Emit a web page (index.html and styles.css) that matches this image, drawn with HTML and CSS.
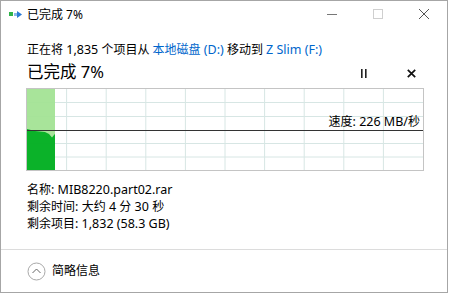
FILE: index.html
```html
<!DOCTYPE html>
<html lang="zh-CN">
<head>
<meta charset="utf-8">
<title>已完成 7%</title>
<link rel="stylesheet" href="styles.css">
</head>
<body>
<div class="window">
  <div class="titlebar">
    <svg class="app-icon" width="16" height="16" viewBox="0 0 16 16">
      <rect x="1" y="5" width="4" height="4" fill="#2fb34a"/>
      <rect x="6" y="6" width="4" height="3" fill="#8ab8e8"/>
      <path d="M9 4 L14 7.5 L9 11 Z" fill="#2a7ad6"/>
      <rect x="9" y="6" width="2" height="3" fill="#2a7ad6"/>
    </svg>
    <div class="title">已完成 7%</div>
    <div class="controls">
      <div class="ctl"><svg width="10" height="10" viewBox="0 0 10 10"><path d="M0 5.5 H10" stroke="#777" stroke-width="1"/></svg></div>
      <div class="ctl"><svg width="10" height="10" viewBox="0 0 10 10"><rect x="0.5" y="0.5" width="9" height="9" fill="none" stroke="#cfcfcf"/></svg></div>
      <div class="ctl"><svg width="10" height="10" viewBox="0 0 10 10"><path d="M0 0 L10 10 M10 0 L0 10" stroke="#555" stroke-width="1"/></svg></div>
    </div>
  </div>
  <div class="content">
    <div class="line1">正在将<span class="en"> 1,835 </span>个项目从 <span class="link">本地磁盘<span class="en"> (D:)</span></span> 移动到 <span class="link en">Z Slim (F:)</span></div>
    <div class="headrow">
      <div class="big">已完成 7%</div>
      <div class="actions">
        <svg class="pause" width="8" height="9" viewBox="0 0 8 9"><rect x="1" y="0" width="1.6" height="9" fill="#222"/><rect x="5" y="0" width="1.6" height="9" fill="#222"/></svg>
        <svg class="stop" width="9" height="9" viewBox="0 0 9 9"><path d="M0.8 0.8 L8.2 8.2 M8.2 0.8 L0.8 8.2" stroke="#111" stroke-width="1.7"/></svg>
      </div>
    </div>
    <div class="graph">
      <svg class="chart" width="396" height="81" viewBox="0 0 396 81">
        <g stroke="#d7e6e4" stroke-width="1">
          <path d="M39.6 0 V81 M79.2 0 V81 M118.8 0 V81 M158.4 0 V81 M198 0 V81 M237.6 0 V81 M277.2 0 V81 M316.8 0 V81 M356.4 0 V81"/>
          <path d="M0 13.5 H396 M0 27.5 H396 M0 54.5 H396 M0 68 H396"/>
        </g>
        <rect x="0" y="0" width="28" height="81" fill="#a3e294" fill-opacity="0.94"/>
        <path d="M0 40 L2 40.5 L8 42 L18 43 L22 45 L25 48.5 L27 46 L28 45 L28 81 L0 81 Z" fill="#06b025" fill-opacity="0.97"/>
        <path d="M0 41.5 H396" stroke="#333" stroke-width="1.2"/>
      </svg>
      <div class="speed">速度<span class="en">: 226 MB/</span>秒</div>
    </div>
    <div class="details">
      <div>名称<span class="en">: MIB8220.part02.rar</span></div>
      <div>剩余时间<span class="en">: </span>大约<span class="en"> 4 </span>分<span class="en"> 30 </span>秒</div>
      <div>剩余项目<span class="en">: 1,832 (58.3 GB)</span></div>
    </div>
  </div>
  <div class="footer">
    <svg class="toggle" width="19" height="19" viewBox="0 0 19 19">
      <circle cx="9.5" cy="9.5" r="8.5" fill="none" stroke="#a8a8a8" stroke-width="1"/>
      <path d="M5.5 11 L9.5 7 L13.5 11" fill="none" stroke="#666" stroke-width="1"/>
    </svg>
    <span class="footer-text">简略信息</span>
  </div>
</div>
</body>
</html>
```
FILE: styles.css
```css
html, body {
  margin: 0;
  padding: 0;
  background: #ffffff;
}
body {
  font-family: "Noto Sans", "Noto Sans CJK SC", sans-serif;
  font-size: 12px;
  color: #000;
}
.en {
  font-size: 12.5px;
}
.window {
  width: 446px;
  height: 291px;
  border: 1px solid #a6a6a6;
  display: flex;
  flex-direction: column;
  background: #fff;
  overflow: hidden;
}
.titlebar {
  height: 30px;
  display: flex;
  align-items: center;
  flex: none;
}
.app-icon {
  margin-left: 7px;
  margin-right: 3px;
  margin-top: -2px;
}
.title {
  flex: 1;
  line-height: 17px;
  margin-top: -3px;
}
.controls {
  display: flex;
  height: 30px;
}
.ctl {
  width: 46px;
  height: 30px;
  display: flex;
  align-items: center;
  justify-content: center;
  margin-top: -2px;
}
.content {
  padding: 10px 0 0 26px;
  flex: none;
}
.line1 {
  line-height: 17px;
  height: 17px;
  white-space: nowrap;
}
.link {
  color: #0066cc;
}
.headrow {
  display: flex;
  align-items: center;
  height: 22px;
  margin-top: 3px;
}
.big {
  font-size: 16.5px;
  line-height: 22px;
  flex: 1;
}
.actions {
  display: flex;
  align-items: center;
  padding-right: 31px;
  margin-top: 2px;
}
.stop {
  margin-left: 39px;
}
.graph {
  position: relative;
  width: 396px;
  height: 81px;
  margin-top: 6px;
  box-shadow: 0 0 0 1px #c4c4c4;
}
.chart {
  display: block;
}
.speed {
  position: absolute;
  right: 3px;
  top: 24px;
  line-height: 17px;
  white-space: nowrap;
}
.details {
  margin-top: 11px;
  line-height: 17px;
}
.details > div {
  height: 17px;
  white-space: nowrap;
}
.footer {
  margin-top: auto;
  height: 42px;
  border-top: 1px solid #dcdcdc;
  display: flex;
  align-items: center;
  padding-left: 26px;
  flex: none;
}
.toggle {
  margin-right: 6px;
}
.footer-text {
  line-height: 17px;
  margin-top: -1px;
}
```
